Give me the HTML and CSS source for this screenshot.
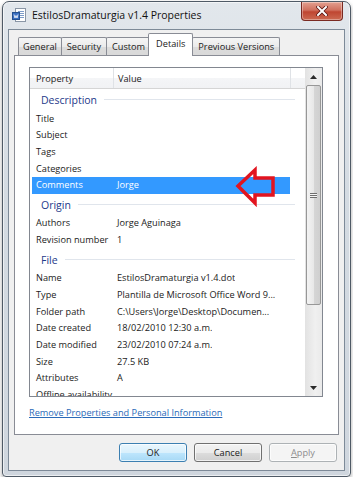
FILE: index.html
```html
<!DOCTYPE html>
<html lang="en">
<head>
    <meta charset="UTF-8">
    <meta name="viewport" content="width=device-width, initial-scale=1.0">
    <title>EstilosDramaturgia v1.4 Properties</title>
    <link rel="stylesheet" href="styles.css">
</head>
<body>
    <div class="window">
        <div class="titlebar">
            <svg class="app-icon" width="15" height="15" viewBox="0 0 15 15">
                <rect x="3.5" y="0.5" width="10" height="13" fill="#fff" stroke="#8a96a6"/>
                <line x1="6" y1="3.5" x2="12" y2="3.5" stroke="#7d9cc8"/>
                <line x1="6" y1="5.5" x2="12" y2="5.5" stroke="#7d9cc8"/>
                <line x1="6" y1="7.5" x2="12" y2="7.5" stroke="#7d9cc8"/>
                <line x1="6" y1="9.5" x2="12" y2="9.5" stroke="#7d9cc8"/>
                <rect x="0.5" y="4.5" width="7" height="7" fill="#3b6fc0" stroke="#24508f"/>
                <path d="M2 6.5 L3 10 L4 7.5 L5 10 L6 6.5" fill="none" stroke="#fff" stroke-width="0.8"/>
            </svg>
            <span class="title">EstilosDramaturgia v1.4 Properties</span>
            <div class="close-btn">
                <svg width="12" height="10" viewBox="0 0 12 10">
                    <path d="M2 1 L10 9 M10 1 L2 9" stroke="#5a1410" stroke-width="3.6" stroke-linecap="square"/>
                    <path d="M2 1 L10 9 M10 1 L2 9" stroke="#fff" stroke-width="2" stroke-linecap="square"/>
                </svg>
            </div>
        </div>

        <div class="client">
            <div class="tabs">
                <div class="tab">General</div>
                <div class="tab">Security</div>
                <div class="tab">Custom</div>
                <div class="tab active">Details</div>
                <div class="tab">Previous Versions</div>
            </div>

            <div class="panel">
                <div class="listbox">
                    <div class="list-main">
                        <div class="list-head">
                            <div class="col-prop">Property</div>
                            <div class="col-val">Value</div>
                            <div class="col-fill"></div>
                        </div>

                        <div class="group"><span>Description</span></div>
                        <div class="row"><span class="prop">Title</span><span class="val"></span></div>
                        <div class="row"><span class="prop">Subject</span><span class="val"></span></div>
                        <div class="row"><span class="prop">Tags</span><span class="val"></span></div>
                        <div class="row"><span class="prop">Categories</span><span class="val"></span></div>
                        <div class="row selected"><span class="prop">Comments</span><span class="val">Jorge</span></div>

                        <div class="group"><span>Origin</span></div>
                        <div class="row"><span class="prop">Authors</span><span class="val">Jorge Aguinaga</span></div>
                        <div class="row"><span class="prop">Revision number</span><span class="val">1</span></div>

                        <div class="group"><span>File</span></div>
                        <div class="row"><span class="prop">Name</span><span class="val">EstilosDramaturgia v1.4.dot</span></div>
                        <div class="row"><span class="prop">Type</span><span class="val">Plantilla de Microsoft Office Word 9...</span></div>
                        <div class="row"><span class="prop">Folder path</span><span class="val">C:\Users\Jorge\Desktop\Documen...</span></div>
                        <div class="row"><span class="prop">Date created</span><span class="val">18/02/2010 12:30 a.m.</span></div>
                        <div class="row"><span class="prop">Date modified</span><span class="val">23/02/2010 07:24 a.m.</span></div>
                        <div class="row"><span class="prop">Size</span><span class="val">27.5 KB</span></div>
                        <div class="row"><span class="prop">Attributes</span><span class="val">A</span></div>
                        <div class="row"><span class="prop">Offline availability</span><span class="val"></span></div>
                    </div>

                    <div class="scrollbar">
                        <div class="sb-btn">
                            <svg width="7" height="4" viewBox="0 0 7 4"><path d="M0 4 L3.5 0 L7 4 Z" fill="#2b2b2b"/></svg>
                        </div>
                        <div class="sb-track">
                            <div class="sb-thumb">
                                <div class="grip"></div>
                            </div>
                        </div>
                        <div class="sb-btn">
                            <svg width="7" height="4" viewBox="0 0 7 4"><path d="M0 0 L3.5 4 L7 0 Z" fill="#2b2b2b"/></svg>
                        </div>
                    </div>

                    <!-- red arrow drawn on top of the list -->
                    <svg class="arrow" width="44" height="41" viewBox="0 0 44 41">
                        <polygon points="5,20 22,4 22,12 40,12 40,29 22,29 22,37" fill="none" stroke="#e2141f" stroke-width="3.5" stroke-linejoin="miter"/>
                    </svg>
                </div>

                <a class="remove-link" href="#">Remove Properties and Personal Information</a>
            </div>

            <div class="buttons">
                <button class="btn default">OK</button>
                <button class="btn">Cancel</button>
                <button class="btn disabled"><u>A</u>pply</button>
            </div>
        </div>
    </div>
</body>
</html>
```

FILE: styles.css
```css
body {
    margin: 0;
    background-color: #fff;
    font-family: 'Open Sans', 'Liberation Sans', sans-serif;
    font-size: 9.2px;
    color: #1a1a1a;
}

.window {
    box-sizing: border-box;
    width: 349px;
    height: 476px;
    margin: 1px 0 0 2px;
    padding: 0 5px 5px 5px;
    border: 1px solid #4f5a66;
    border-radius: 7px 7px 4px 4px;
    background: linear-gradient(to bottom, #e2e7ec 0%, #d4dbe2 40%, #cfd6de 100%);
    box-shadow: 0 2px 4px rgba(0, 0, 0, 0.35), inset 0 0 0 1px rgba(255, 255, 255, 0.6);
    display: flex;
    flex-direction: column;
}

.titlebar {
    height: 27px;
    display: flex;
    align-items: center;
    flex-shrink: 0;
}

.app-icon {
    margin: 0 5px 0 4px;
}

.title {
    font-size: 10.5px;
    color: #111;
    padding-bottom: 1px;
}

.close-btn {
    margin-left: auto;
    margin-right: 2px;
    align-self: flex-start;
    width: 42px;
    height: 19px;
    box-sizing: border-box;
    border: 1px solid #7a2a22;
    border-top: none;
    border-radius: 0 0 4px 4px;
    background: linear-gradient(to bottom, #e3a090 0%, #d0705e 45%, #bf4631 55%, #cc6a52 100%);
    box-shadow: inset 0 0 0 1px rgba(255, 255, 255, 0.35);
    display: flex;
    align-items: center;
    justify-content: center;
}

.client {
    flex: 1;
    border: 1px solid #7d8a98;
    background-color: #f0f0f0;
    padding: 3px 5px 0 5px;
    display: flex;
    flex-direction: column;
}

.tabs {
    display: flex;
    align-items: flex-end;
    margin-left: 4px;
    height: 22px;
}

.tab {
    height: 18px;
    box-sizing: border-box;
    padding: 0 5px;
    border: 1px solid #898c95;
    border-bottom: none;
    border-radius: 2px 2px 0 0;
    margin-right: -1px;
    background: linear-gradient(to bottom, #f5f5f5 0%, #ebebeb 50%, #dcdcdc 51%, #d9d9d9 100%);
    line-height: 18px;
    white-space: nowrap;
}

.tab:first-child {
    padding: 0 4px;
}

.tab.active {
    position: relative;
    z-index: 1;
    height: 23px;
    margin: 0 -1px -1px -2px;
    padding: 0 7px;
    background: #fff;
    line-height: 20px;
}

.panel {
    box-sizing: border-box;
    height: 380px;
    border: 1px solid #898c95;
    background-color: #fff;
    padding: 11px 15px 0 14px;
}

.listbox {
    position: relative;
    box-sizing: border-box;
    height: 330px;
    border: 1px solid #828790;
    display: flex;
    overflow: hidden;
}

.list-main {
    flex: 1;
    overflow: hidden;
}

.list-head {
    display: flex;
    height: 20px;
    border-bottom: 1px solid #d5d5d5;
    background: linear-gradient(to bottom, #fff 0%, #fff 50%, #f4f5f7 51%, #f1f2f4 100%);
    line-height: 21px;
}

.col-prop {
    width: 77px;
    padding-left: 6px;
    border-right: 1px solid #dfe2e6;
}

.col-val {
    width: 172px;
    padding-left: 4px;
    border-right: 1px solid #dfe2e6;
}

.col-fill {
    flex: 1;
}

.group {
    height: 21.5px;
    width: 265px;
    display: flex;
    align-items: center;
    padding-left: 11px;
    box-sizing: border-box;
    font-size: 10.5px;
    color: #1e3a8a;
}

.group::after {
    content: '';
    flex: 1;
    height: 1px;
    margin-left: 7px;
    background-color: #e0e5ec;
}

.row {
    display: flex;
    height: 16.7px;
    line-height: 16.7px;
    width: 258px;
    margin-left: 2px;
    white-space: nowrap;
}

.row .prop {
    width: 77px;
    padding-left: 4px;
    flex-shrink: 0;
}

.row .val {
    padding-left: 4px;
    overflow: hidden;
}

.row.selected {
    background-color: #3399ff;
    color: #fff;
}

.scrollbar {
    width: 17px;
    display: flex;
    flex-direction: column;
    background: linear-gradient(to right, #e2e2e2, #f0f0f0 60%, #eaeaea);
}

.sb-btn {
    height: 17px;
    display: flex;
    align-items: center;
    justify-content: center;
    flex-shrink: 0;
}

.sb-track {
    flex: 1;
    padding: 0 1px;
}

.sb-thumb {
    box-sizing: border-box;
    height: 220px;
    border: 1px solid #979797;
    border-radius: 2px;
    background: linear-gradient(to right, #f3f3f3 0%, #e8e8e8 50%, #d6d6d6 51%, #cfcfcf 100%);
    display: flex;
    align-items: center;
    justify-content: center;
}

.grip {
    width: 7px;
    height: 5px;
    background: repeating-linear-gradient(to bottom, #6f6f6f 0, #6f6f6f 1px, #f6f6f6 1px, #f6f6f6 2px);
}

.arrow {
    position: absolute;
    left: 203px;
    top: 98px;
}

.remove-link {
    display: block;
    margin-top: 9px;
    color: #2a6ab8;
    text-decoration: underline;
    line-height: 14px;
}

.buttons {
    display: flex;
    justify-content: flex-end;
    gap: 7px;
    margin-top: 8px;
    padding-right: 2px;
}

.btn {
    width: 68px;
    height: 19px;
    padding: 0;
    font-family: inherit;
    font-size: 9.2px;
    color: #1a1a1a;
    border: 1px solid #707070;
    border-radius: 3px;
    background: linear-gradient(to bottom, #f2f2f2 0%, #ebebeb 50%, #dddddd 51%, #cfcfcf 100%);
    box-shadow: inset 0 0 0 1px rgba(255, 255, 255, 0.7);
}

.btn.default {
    border-color: #3c7fb1;
    background: linear-gradient(to bottom, #eaf6fd 0%, #d9f0fc 50%, #bee6fd 51%, #a7d9f5 100%);
}

.btn.disabled {
    color: #8c8c8c;
    border-color: #adb2b5;
    background: #f4f4f4;
}
```
